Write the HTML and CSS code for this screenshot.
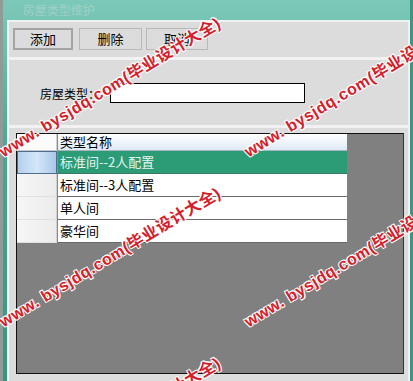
FILE: index.html
```html
<!DOCTYPE html>
<html>
    <head>
        <title>房屋类型维护</title>
        <link rel="stylesheet" href="styles.css">
    </head>
    <body>
        <div class="frame">
            <div class="titlebar">房屋类型维护</div>
            <div class="client">
                <div class="toolbar">
                    <button class="btn btn-focus">添加</button>
                    <button class="btn btn-del">删除</button>
                    <button class="btn">取消</button>
                </div>
                <div class="panel">
                    <label for="type">房屋类型：</label>
                    <input id="type" type="text">
                </div>
                <div class="grid">
                    <div class="row head">
                        <div class="rh"></div>
                        <div class="cell">类型名称</div>
                    </div>
                    <div class="row selected">
                        <div class="rh"></div>
                        <div class="cell">标准间--2人配置</div>
                    </div>
                    <div class="row">
                        <div class="rh"></div>
                        <div class="cell">标准间--3人配置</div>
                    </div>
                    <div class="row">
                        <div class="rh"></div>
                        <div class="cell">单人间</div>
                    </div>
                    <div class="row">
                        <div class="rh"></div>
                        <div class="cell">豪华间</div>
                    </div>
                </div>
            </div>
        </div>

        <!-- watermark over the screenshot -->
        <div class="marks">
            <span class="mark m1">www. bysjdq.com(毕业设计大全)</span>
            <span class="mark m2">www. bysjdq.com(毕业设计大全)</span>
            <span class="mark m3">www. bysjdq.com(毕业设计大全)</span>
            <span class="mark m4">www. bysjdq.com(毕业设计大全)</span>
            <span class="mark m5">www. bysjdq.com(毕业设计大全)</span>
        </div>
    </body>
</html>
```

FILE: styles.css
```css
body{
    margin: 0;
    padding: 0;
    width: 413px;
    height: 381px;
    overflow: hidden;
    position: relative;
    font-family: "Noto Sans CJK SC", "Liberation Sans", sans-serif;
    font-size: 13px;
    color: #000;
    background: #3f8a78;
}

.frame{
    height: 381px;
    display: flex;
    flex-direction: column;
    border-left: 3px solid #8e9b97;
    border-right: 3px solid #3f9482;
    background: linear-gradient(to bottom, #7dc9b9, #4aa592 40%, #3a9380);
}

.titlebar{
    height: 20px;
    padding-left: 20px;
    line-height: 20px;
    font-size: 12px;
    color: rgba(190, 214, 208, 0.6);
    filter: blur(0.6px);
}

.client{
    flex: 1;
    margin-left: 4px;
    border-top: 2px solid #eef3f2;
    border-left: 2px solid #f3f6f5;
    border-right: 2px solid #eef2f1;
    background: #dcdcdc;
    display: flex;
    flex-direction: column;
}

.toolbar{
    height: 38px;
    padding: 6px 0 0 4px;
    box-sizing: border-box;
    display: flex;
    align-items: flex-start;
    border-bottom: 3px solid #f2f2f2;
}

.btn{
    width: 62px;
    height: 22px;
    margin-right: 4px;
    padding: 0;
    font-family: "Noto Sans CJK SC", sans-serif;
    font-size: 13px;
    line-height: 18px;
    background: #dcdcdc;
    border: 1px solid #b8b8b8;
    color: #000;
}
.btn-focus{
    width: 60px;
    border: 2px solid #a4a4a4;
    margin-right: 6px;
}
.btn-del{
    width: 63px;
}

.panel{
    height: 68px;
    display: flex;
    align-items: center;
    padding: 0 0 0 31px;
    border-bottom: 3px solid #f2f2f2;
    box-sizing: border-box;
}
.panel label{
    font-size: 12px;
    padding-top: 2px;
    margin-right: 10px;
}
.panel input{
    width: 195px;
    height: 20px;
    margin-top: 1px;
    box-sizing: border-box;
    border: 1px solid #000;
    background: #fff;
    padding: 0;
}

.grid{
    margin: 5px 4px 0 7px;
    height: 241px;
    box-sizing: border-box;
    border: 1px solid #111;
    border-right-color: #333;
    background: #808080;
}

.row{
    display: flex;
    height: 23px;
}
.rh{
    width: 40px;
    box-sizing: border-box;
    background: linear-gradient(to right, #f6f6f6, #ececec);
    border-bottom: 1px solid #e0e0e0;
    border-right: 1px solid #d0d0d0;
}
.cell{
    width: 290px;
    box-sizing: border-box;
    padding-left: 2px;
    line-height: 22px;
    background: #fff;
    border-bottom: 1px solid #6a6a6a;
    border-left: 1px solid #8a8a8a;
}

.head{
    height: 17px;
}
.head .rh{
    background: #fbfbfb;
    border-bottom-color: #c8c8c8;
}
.head .cell{
    line-height: 16px;
    background: linear-gradient(to bottom, #ffffff, #dfeaf5);
    border-bottom: 1px solid #a8b4c0;
}

.selected .rh{
    background: linear-gradient(to right, #b4d0ec, #d4e6f8 50%, #a8c8e8);
    border: 1px solid #4f6d8e;
}
.selected .cell{
    background: #2b9c76;
    color: #e6f4ee;
    border-bottom-color: #3a7a64;
}

.marks{
    position: absolute;
    left: 0;
    top: 0;
    width: 413px;
    height: 381px;
    overflow: hidden;
    pointer-events: none;
}
.mark{
    position: absolute;
    white-space: nowrap;
    font-family: "Liberation Sans", "Noto Sans CJK SC", sans-serif;
    font-weight: bold;
    font-size: 16px;
    line-height: 17px;
    letter-spacing: 0.6px;
    color: #d4202a;
    transform: rotate(-31deg);
    transform-origin: left bottom;
    text-shadow: 1px 1px 0 #fff, -1px -1px 0 #fff, 1px -1px 0 #fff, -1px 1px 0 #fff;
}
.m1{ left: 5px; top: 143px; }
.m2{ left: 5px; top: 313px; }
.m3{ left: 5px; top: 483px; }
.m4{ left: 250px; top: 143px; }
.m5{ left: 250px; top: 313px; }
```
